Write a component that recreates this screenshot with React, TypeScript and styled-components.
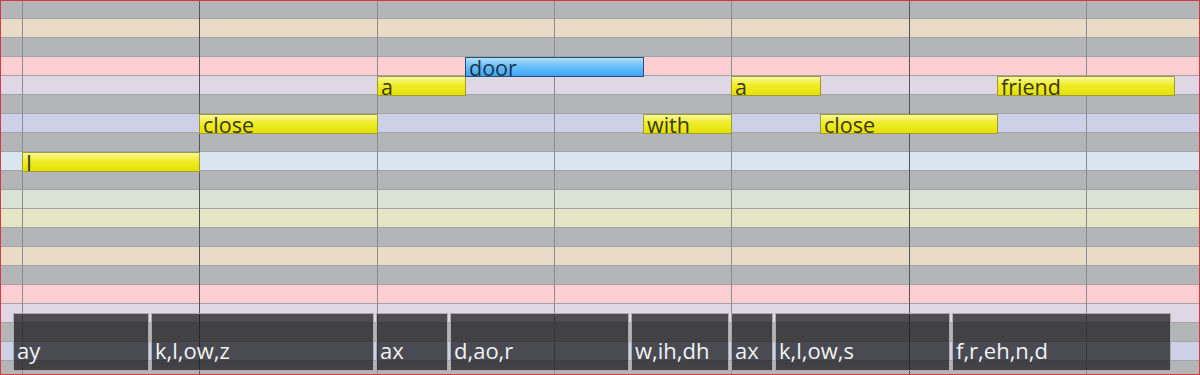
import React from 'react';
import styled, { createGlobalStyle } from 'styled-components';

const GlobalStyle = createGlobalStyle`
  html, body {
    margin: 0;
    padding: 0;
    background: #b4b5b7;
    overflow: hidden;
  }
  body {
    font-family: "Open Sans", "Noto Sans", sans-serif;
  }
`;

const ROW_H = 19;
const ORIGIN = 22;
const BEAT = 177.3;

// one octave, top row first; gray rows are the black keys
const OCTAVE = [
  '#b4b5b7', '#eadbc6', '#b4b5b7', '#fdcfd3', '#dfd8e4', '#b4b5b7',
  '#ccd1e8', '#b4b5b7', '#dae6ef', '#b4b5b7', '#d9e3d5', '#e6e5c5',
];

const Roll = styled.div`
  position: relative;
  width: 1200px;
  height: 375px;
  overflow: hidden;
  background: #b4b5b7;

  &::after {
    content: '';
    position: absolute;
    inset: 0;
    border: 1px solid #d63a40;
    pointer-events: none;
    z-index: 10;
  }
`;

const Keys = styled.div`
  display: flex;
  flex-direction: column;
`;

const KeyRow = styled.div<{ $bg: string }>`
  height: ${ROW_H}px;
  box-sizing: border-box;
  background: ${(p) => p.$bg};
  border-bottom: 1px solid #a2a3a6;
`;

const GridLine = styled.div<{ $bar?: boolean }>`
  position: absolute;
  top: 0;
  bottom: 0;
  width: 1px;
  background: ${(p) => (p.$bar ? '#545558' : '#8b8c8f')};
`;

const Note = styled.div<{ $selected?: boolean }>`
  position: absolute;
  height: ${ROW_H + 1}px;
  box-sizing: border-box;
  padding-left: 3px;
  white-space: nowrap;
  font-size: 21.5px;
  line-height: 20px;
  color: ${(p) => (p.$selected ? '#1d3550' : '#3a3820')};
  border: 1px solid ${(p) => (p.$selected ? '#234f78' : '#a09a32')};
  background: ${(p) =>
    p.$selected
      ? 'linear-gradient(#b2e0ff 0%, #6cc0fa 45%, #3ea6f2 100%)'
      : 'linear-gradient(#f8f8a0 0%, #f0ee30 40%, #e4e000 100%)'};
  z-index: 2;
`;

const PhonemeLane = styled.div`
  position: absolute;
  left: 0;
  right: 0;
  top: 313px;
  height: 58px;
  z-index: 3;
`;

const Phoneme = styled.div`
  position: absolute;
  top: 0;
  height: 58px;
  box-sizing: border-box;
  padding: 25px 0 0 3px;
  border: 1px solid rgba(205, 205, 208, 0.75);
  background: rgba(22, 22, 24, 0.72);
  color: #f2f2f2;
  font-size: 22px;
  line-height: 22px;
  white-space: nowrap;
  overflow: hidden;
`;

const notes = [
  { text: 'I', row: 8, start: 0, len: 1 },
  { text: 'close', row: 6, start: 1, len: 1 },
  { text: 'a', row: 4, start: 2, len: 0.5 },
  { text: 'door', row: 3, start: 2.5, len: 1, selected: true },
  { text: 'with', row: 6, start: 3.5, len: 0.5 },
  { text: 'a', row: 4, start: 4, len: 0.5 },
  { text: 'close', row: 6, start: 4.5, len: 1 },
  { text: 'friend', row: 4, start: 5.5, len: 1 },
];

const phonemes = [
  { text: 'ay', left: 13, right: 149 },
  { text: 'k,l,ow,z', left: 151, right: 374 },
  { text: 'ax', left: 376, right: 448 },
  { text: 'd,ao,r', left: 450, right: 629 },
  { text: 'w,ih,dh', left: 631, right: 729 },
  { text: 'ax', left: 731, right: 773 },
  { text: 'k,l,ow,s', left: 775, right: 950 },
  { text: 'f,r,eh,n,d', left: 952, right: 1171 },
];

const beats = [0, 1, 2, 3, 4, 5, 6];

export default function App() {
  const rows = Array.from({ length: 20 }, (_, i) => OCTAVE[i % 12]);
  return (
    <>
      <GlobalStyle />
      <Roll>
        <Keys>
          {rows.map((bg, i) => (
            <KeyRow key={i} $bg={bg} />
          ))}
        </Keys>
        {beats.map((b) => (
          <GridLine
            key={b}
            $bar={b === 1 || b === 5}
            style={{ left: Math.round(ORIGIN + b * BEAT) }}
          />
        ))}
        {notes.map((n, i) => {
          const left = Math.round(ORIGIN + n.start * BEAT);
          const right = Math.round(ORIGIN + (n.start + n.len) * BEAT);
          return (
            <Note
              key={i}
              $selected={n.selected}
              style={{ left, width: right - left + 1, top: n.row * ROW_H }}
            >
              {n.text}
            </Note>
          );
        })}
        <PhonemeLane>
          {phonemes.map((p, i) => (
            <Phoneme key={i} style={{ left: p.left, width: p.right - p.left }}>
              {p.text}
            </Phoneme>
          ))}
        </PhonemeLane>
      </Roll>
    </>
  );
}
